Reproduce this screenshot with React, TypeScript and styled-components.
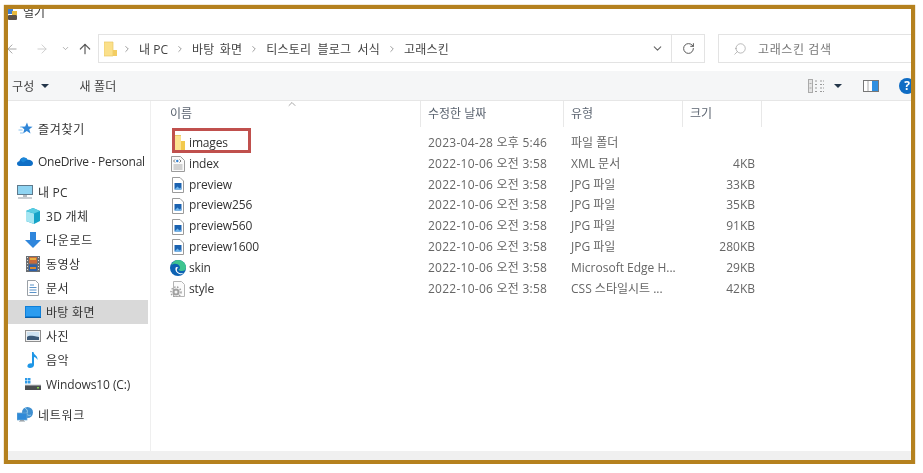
import React from 'react';
import styled, { createGlobalStyle } from 'styled-components';
import { ArrowLeft, ArrowRight, ArrowUp, ChevronDown, ChevronRight, ChevronUp, RotateCw, Search } from 'lucide-react';

const GlobalStyle = createGlobalStyle`
  html, body {
    margin: 0;
    padding: 0;
    background: #fff;
  }
  body {
    font-family: "Open Sans", "Noto Sans CJK KR", sans-serif;
    font-size: 12px;
    color: #3a3a3a;
  }
`;

const Frame = styled.div`
  box-sizing: border-box;
  width: 911px;
  height: 459px;
  margin: 5px 0 0 4px;
  border: 4px solid #b5811e;
  box-shadow: 0 0 1px #b5811e;
  display: flex;
  flex-direction: column;
  overflow: hidden;
  background: #fff;
  filter: blur(0.4px);
`;

const TitleBar = styled.div`
  flex: none;
  height: 25px;
  display: flex;
  align-items: flex-start;
  gap: 6px;
  line-height: 12px;
  color: #333;
  margin-top: -2px;
  margin-bottom: 2px;
`;

const TitleSvg = styled.svg`
  flex: none;
  margin-top: 2px;
`;

const NavRow = styled.div`
  flex: none;
  height: 29px;
  margin-bottom: 8px;
  display: flex;
  align-items: center;
`;

const NavButton = styled.span<{ $w: number; $ml?: number; $color: string }>`
  flex: none;
  width: ${(p) => p.$w}px;
  margin-left: ${(p) => p.$ml || 0}px;
  display: flex;
  justify-content: center;
  color: ${(p) => p.$color};
  svg {
    flex: none;
  }
`;

const AddressBox = styled.div`
  flex: none;
  box-sizing: border-box;
  width: 607px;
  height: 29px;
  margin-left: 3px;
  border: 1px solid #e3e3e3;
  display: flex;
  align-items: center;
  padding-left: 5px;
  color: #444;
`;

const Crumbs = styled.div`
  flex: 1;
  display: flex;
  align-items: center;
  gap: 7px;
  white-space: nowrap;
`;

const Crumb = styled.span<{ $track: number; $word: number }>`
  letter-spacing: ${(p) => p.$track}px;
  word-spacing: ${(p) => p.$word}px;
`;

const FolderWrap = styled.span`
  display: flex;
  margin-right: -2px;
`;

const CrumbSep = styled(ChevronRight)`
  color: #8a8a8a;
  flex: none;
`;

const AddressArrow = styled(ChevronDown)`
  color: #666;
  margin-right: 7px;
`;

const AddressTail = styled.span`
  flex: none;
  width: 32px;
  display: flex;
  justify-content: center;
  height: 100%;
  align-items: center;
  border-left: 1px solid #e3e3e3;
  color: #555;
`;

const SearchBox = styled.div`
  flex: none;
  box-sizing: border-box;
  width: 210px;
  height: 29px;
  margin-left: 13px;
  border: 1px solid #e3e3e3;
  display: flex;
  align-items: center;
  gap: 11px;
  padding-left: 14px;
  color: #777;
  letter-spacing: 0.6px;
`;

const SearchGlass = styled(Search)`
  transform: scaleX(-1);
  color: #8c8c8c;
`;

const Toolbar = styled.div`
  flex: none;
  box-sizing: border-box;
  height: 30px;
  background: #f5f6f7;
  border-bottom: 1px solid #e6e6e6;
  display: flex;
  align-items: center;
  padding-left: 4px;
  color: #444;
`;

const ToolButton = styled.span`
  display: flex;
  align-items: center;
  gap: 7px;
  margin-right: 30px;
  letter-spacing: 0.2px;
`;

const Caret = styled.i`
  width: 0;
  height: 0;
  border-left: 4px solid transparent;
  border-right: 4px solid transparent;
  border-top: 4px solid #24364a;
`;

const ToolRight = styled.div`
  margin-left: auto;
  display: flex;
  align-items: center;
  margin-right: -4px;
`;

const ViewIcon = styled.svg`
  margin-right: 10px;
`;

const PaneIcon = styled.svg`
  margin-left: 21px;
`;

const HelpDot = styled.span`
  flex: none;
  width: 16px;
  height: 16px;
  margin-left: 20px;
  border-radius: 50%;
  background: #0f6cc4;
  color: #fff;
  font-weight: 700;
  font-size: 12px;
  line-height: 16px;
  text-align: center;
`;

const Body = styled.div`
  flex: 1;
  min-height: 0;
  display: flex;
`;

const Sidebar = styled.nav`
  flex: none;
  box-sizing: border-box;
  width: 143px;
  padding-top: 16px;
  border-right: 1px solid #efefef;
`;

const SideRow = styled.div<{ $nested?: boolean; $active?: boolean; $gap?: number }>`
  box-sizing: border-box;
  width: 140px;
  height: 24px;
  margin-top: ${(p) => p.$gap || 0}px;
  padding-left: ${(p) => (p.$nested ? 17 : 9)}px;
  display: flex;
  align-items: center;
  gap: 5px;
  white-space: nowrap;
  color: #333;
  background: ${(p) => (p.$active ? '#d9d9d9' : 'transparent')};
`;

const SideLabel = styled.span<{ $track: number }>`
  letter-spacing: ${(p) => p.$track}px;
`;

const IconBox = styled.span`
  flex: none;
  width: 16px;
  height: 16px;
  display: block;
  svg {
    display: block;
  }
`;

const Main = styled.main`
  flex: 1;
  min-width: 0;
`;

const Columns = styled.div`
  display: grid;
  grid-template-columns: 270px 143px 119px 79px;
`;

const HeaderRow = styled(Columns)`
  height: 26px;
  margin-bottom: 6px;
  color: #5b6470;
`;

const HeaderCell = styled.div<{ $first?: boolean }>`
  padding-left: ${(p) => (p.$first ? 19 : 7)}px;
  border-right: 1px solid #e8e8e8;
  line-height: 26px;
  position: relative;
`;

const SortMark = styled(ChevronUp)`
  position: absolute;
  left: 135px;
  top: -3px;
  color: #8a8a8a;
`;

const FileRow = styled(Columns)`
  height: 20.8px;
  line-height: 20.8px;
  color: #666;
  white-space: nowrap;
`;

const NameCell = styled.div`
  padding-left: 19px;
  display: flex;
  align-items: center;
  gap: 3px;
  color: #333;
  letter-spacing: -0.15px;
  position: relative;
`;

const DateCell = styled.div`
  padding-left: 7px;
  letter-spacing: 0.25px;
`;

const Cell = styled.div`
  padding-left: 7px;
`;

const SizeCell = styled.div`
  padding-right: 7px;
  text-align: right;
`;

const RedMark = styled.div`
  position: absolute;
  left: 21px;
  top: -5px;
  width: 73px;
  height: 19px;
  border: 3px solid #c0504d;
`;

const BottomStrip = styled.div`
  flex: none;
  height: 9px;
  background: #f0f0f0;
`;

const TitleIcon = () => (
  <TitleSvg width="9" height="12" viewBox="0 0 9 12">
    <rect x="0" y="0" width="5" height="5" fill="#3f7fd0" />
    <rect x="4" y="2" width="5" height="4" fill="#e8b93c" />
    <rect x="0" y="6" width="9" height="5" rx="1" fill="#5a5148" />
  </TitleSvg>
);

const ViewsIcon = () => (
  <ViewIcon width="16" height="14" viewBox="0 0 16 14">
    <rect x="0.5" y="0.5" width="4" height="13" fill="#e4e4e4" stroke="#aaa" />
    <path d="M1.5 4.5h2M1.5 9h2" stroke="#aaa" />
    <path d="M7 2h3M12 2h4M7 5.500h3M12 5.500h4M7 9h3M12 9h4M7 12.500h3M12 12.500h4" stroke="#9a9a9a" strokeDasharray="2 1" />
  </ViewIcon>
);

const PreviewPaneIcon = () => (
  <PaneIcon width="16" height="12" viewBox="0 0 16 12">
    <rect x="0.500" y="0.500" width="15" height="11" fill="#fff" stroke="#777" />
    <rect x="9" y="1" width="6" height="10" fill="#2f8fe0" />
    <path d="M5 1v10" stroke="#aaa" />
  </PaneIcon>
);

const FolderFlat = () => (
  <svg width="13" height="16" viewBox="0 0 13 16">
    <path d="M0 1h9v14H0z" fill="#fbe08a" stroke="#e9c766" strokeWidth="0.7" />
    <path d="M9 9h4v6H9z" fill="#f3cd62" />
  </svg>
);

const FolderTall = () => (
  <svg width="16" height="18" viewBox="0 0 16 18">
    <path d="M5 0h6v17H5z" fill="#fce28f" />
    <path d="M11 6h4v11h-4z" fill="#f2c94c" />
    <path d="M5 0h6v1H5z" fill="#e9c766" />
  </svg>
);

const Star = () => (
  <svg width="16" height="16" viewBox="0 0 16 16">
    <path d="M10 1.500l1.400 4 4.200.2-3.300 2.600 1.200 4.200-3.700-2.500-3.700 2.500 1.200-4.200-3.300-2.600 4.200-.2z" fill="#2f86d8" />
    <path d="M3 6h3M1.500 9h4M3 12h3" stroke="#8cc4f0" strokeWidth="1" />
  </svg>
);

const Cloud = () => (
  <svg width="16" height="16" viewBox="0 0 16 16">
    <path d="M2.500 13C.8 13 0 11.800 0 10.600 0 9.300 1 8.300 2.300 8.200 2.900 6 4.600 4.500 6.700 4.500c1.700 0 3.100.9 3.800 2.300 2.300-.3 5.500.9 5.500 3.500 0 1.600-1.200 2.700-2.800 2.700z" fill="#0f6fc6" />
    <path d="M6.700 4.500c1.700 0 3.100.9 3.800 2.300L6 9.500 3.500 7.300C4.100 5.600 5.300 4.500 6.700 4.500z" fill="#1b86d8" />
  </svg>
);

const Monitor = () => (
  <svg width="16" height="16" viewBox="0 0 16 16">
    <rect x="0" y="1" width="16" height="10" fill="#5f7a8c" />
    <rect x="1" y="2" width="14" height="8" fill="#8fd4f2" />
    <rect x="6" y="11" width="4" height="2" fill="#b5bcc2" />
    <rect x="1" y="13" width="14" height="2" fill="#c9ced2" />
  </svg>
);

const Cube = () => (
  <svg width="16" height="16" viewBox="0 0 16 16">
    <path d="M8 0l7 3v10l-6 3-8-3V3z" fill="#15a3c7" />
    <path d="M1 3l8 2.500V16l-8-3z" fill="#a6e6f2" />
    <path d="M8 0l7 3-6 2.500L1 3z" fill="#58cde2" />
  </svg>
);

const DownArrow = () => (
  <svg width="16" height="16" viewBox="0 0 16 16">
    <path d="M5 0h6v8h5l-8 8-8-8h5z" fill="#2f86dc" />
  </svg>
);

const Film = () => (
  <svg width="16" height="16" viewBox="0 0 16 16">
    <rect x="1" y="0" width="14" height="16" fill="#6b6f73" />
    <rect x="4" y="1" width="8" height="6.500" fill="#c86a3a" />
    <rect x="4" y="8.500" width="8" height="6.500" fill="#2c5fa8" />
    <path d="M5 3h6" stroke="#e8b040" strokeWidth="2" />
    <path d="M5 12h6" stroke="#d88a30" strokeWidth="2" />
    <path d="M2.500 1v14M13.500 1v14" stroke="#dfdfdf" strokeDasharray="1 2" />
  </svg>
);

const Doc = () => (
  <svg width="16" height="16" viewBox="0 0 16 16">
    <path d="M2.500.5h8l3 3v12h-11z" fill="#fff" stroke="#9aa0a6" />
    <path d="M5 5h4M4.500 7.500h7M4.500 10h7M4.500 12.500h7" stroke="#5a93c9" />
  </svg>
);

const Desktop = () => (
  <svg width="16" height="16" viewBox="0 0 16 16">
    <rect x="0" y="2" width="16" height="12" fill="#0f7fd8" />
    <rect x="1" y="3" width="14" height="9" fill="#2b9cf0" />
    <path d="M0 13h16v1H0z" fill="#0c5fa8" />
  </svg>
);

const Photo = () => (
  <svg width="16" height="16" viewBox="0 0 16 16">
    <rect x="0.500" y="2.500" width="15" height="11" fill="#f1f1f1" stroke="#8f8f8f" />
    <rect x="2" y="4" width="12" height="8" fill="#cfe3f2" />
    <path d="M2 9c3-2 5-1 12 0v3H2z" fill="#3c5a78" />
  </svg>
);

const Note = () => (
  <svg width="16" height="16" viewBox="0 0 16 16">
    <path d="M7 0h1.500c.3 3 4.500 3.500 4 8-.8-2-2.500-3-3.500-3v8c0 2-2 3-4 3s-3-1-2.500-2.500S5 11 7 11.500z" fill="#1e96e6" />
  </svg>
);

const Drive = () => (
  <svg width="16" height="16" viewBox="0 0 16 16">
    <path d="M0 2h2.500v2.500H0zM3 2h2.500v2.500H3zM0 5h2.500v2.500H0zM3 5h2.500v2.500H3z" fill="#2f9be8" />
    <rect x="0" y="9" width="16" height="5" fill="#4a4d50" />
    <path d="M0 9h16" stroke="#c4c8cb" />
    <rect x="12" y="11" width="2" height="1.500" fill="#7fd04a" />
  </svg>
);

const Network = () => (
  <svg width="16" height="16" viewBox="0 0 16 16">
    <circle cx="10.500" cy="5.500" r="5.500" fill="#3f8fd0" />
    <path d="M8 1c2 1 3 3 2 5s2 3 4 2" stroke="#9cd0ee" fill="none" />
    <rect x="0" y="6" width="10" height="7" fill="#2f8ad8" stroke="#6da8d4" strokeWidth="0.7" />
    <rect x="3" y="13" width="4" height="1" fill="#9aa3aa" />
    <rect x="2" y="14" width="6" height="1" fill="#c4cacd" />
  </svg>
);

const XmlFile = () => (
  <svg width="16" height="16" viewBox="0 0 16 16">
    <path d="M1.500.5h9l4 4v11h-13z" fill="#fafafa" stroke="#9b9b9b" />
    <path d="M5 3.500L3.500 5 5 6.500M9.500 3.500L11 5 9.500 6.500" stroke="#777" fill="none" />
    <circle cx="7.300" cy="5" r="1.200" fill="#2f7fd0" />
    <path d="M3.500 9h9M3.500 11h9M3.500 13h9" stroke="#a8a8a8" />
  </svg>
);

const JpgFile = () => (
  <svg width="16" height="16" viewBox="0 0 16 16">
    <path d="M2.500.5h7.500l3.500 3.500v11.500h-11z" fill="#fff" stroke="#9b9b9b" />
    <rect x="4.500" y="6" width="7" height="6.500" fill="#1b62b0" />
    <path d="M4.500 12.500l3-3 2 2 1-1 1 2z" fill="#6cb4ec" />
  </svg>
);

const EdgeFile = () => (
  <svg width="16" height="16" viewBox="0 0 16 16">
    <circle cx="8" cy="8" r="8" fill="#0d62b3" />
    <path d="M1 5.500C2.500 2 5 0 8 0c4.500 0 8 3.300 8 7.500 0 2.500-2 3.500-4 3.500-1.500 0-3-.5-3.500-1.500 1.500-.5 2-2 1-3.500C8 3.500 3.500 3 1 5.500z" fill="#3ec48f" />
    <path d="M6 7c-1.500 2.500 0 6 3.500 7 2 .5 3.500 0 4.500-1-2 .5-6 .5-7-2-.5-1.500 0-3 1.500-3.500z" fill="#fff" />
  </svg>
);

const CssFile = () => (
  <svg width="16" height="16" viewBox="0 0 16 16">
    <path d="M3.500.5h8l3 3v12h-11z" fill="#fbfbfb" stroke="#b5b5b5" />
    <circle cx="6" cy="11" r="3.600" fill="#a0a0a0" />
    <circle cx="6" cy="11" r="5" fill="none" stroke="#a0a0a0" strokeWidth="1.500" strokeDasharray="1.500 1.500" />
    <circle cx="6" cy="11" r="1.500" fill="#f4f4f4" />
  </svg>
);

const sideItems: { label: string; icon: React.ReactNode; track: number; nested?: boolean; active?: boolean; gap?: number }[] = [
  { label: '즐겨찾기', icon: <Star />, track: 0.7 },
  { label: 'OneDrive - Personal', icon: <Cloud />, track: -0.26, gap: 8 },
  { label: '내 PC', icon: <Monitor />, track: 0.2, gap: 7 },
  { label: '3D 개체', icon: <Cube />, track: 0.3, nested: true },
  { label: '다운로드', icon: <DownArrow />, track: 0.7, nested: true },
  { label: '동영상', icon: <Film />, track: 0.5, nested: true },
  { label: '문서', icon: <Doc />, track: 0.5, nested: true },
  { label: '바탕 화면', icon: <Desktop />, track: 0.3, nested: true, active: true },
  { label: '사진', icon: <Photo />, track: 0.5, nested: true },
  { label: '음악', icon: <Note />, track: 0.5, nested: true },
  { label: 'Windows10 (C:)', icon: <Drive />, track: -0.1, nested: true },
  { label: '네트워크', icon: <Network />, track: 0.7, gap: 7 },
];

const oldDate = '2022-10-06 오전 3:58';

const files: { name: string; icon: React.ReactNode; date: string; type: string; size: string; marked?: boolean }[] = [
  { name: 'images', icon: <FolderTall />, date: '2023-04-28 오후 5:46', type: '파일 폴더', size: '', marked: true },
  { name: 'index', icon: <XmlFile />, date: oldDate, type: 'XML 문서', size: '4KB' },
  { name: 'preview', icon: <JpgFile />, date: oldDate, type: 'JPG 파일', size: '33KB' },
  { name: 'preview256', icon: <JpgFile />, date: oldDate, type: 'JPG 파일', size: '35KB' },
  { name: 'preview560', icon: <JpgFile />, date: oldDate, type: 'JPG 파일', size: '91KB' },
  { name: 'preview1600', icon: <JpgFile />, date: oldDate, type: 'JPG 파일', size: '280KB' },
  { name: 'skin', icon: <EdgeFile />, date: oldDate, type: 'Microsoft Edge H...', size: '29KB' },
  { name: 'style', icon: <CssFile />, date: oldDate, type: 'CSS 스타일시트 ...', size: '42KB' },
];

const crumbs = [
  { label: '내 PC', track: 0, word: 0 },
  { label: '바탕 화면', track: 0.2, word: 2 },
  { label: '티스토리 블로그 서식', track: 0.2, word: 3 },
  { label: '고래스킨', track: 0.2, word: 0 },
];

export default function App() {
  return (
    <>
      <GlobalStyle />
      <Frame>
        <TitleBar>
          <TitleIcon />
          <span>열기</span>
        </TitleBar>
        <NavRow>
          <NavButton $w={8} $color="#9a9a9a"><ArrowLeft size={14} strokeWidth={1.5} /></NavButton>
          <NavButton $w={20} $ml={16} $color="#c8c8c8"><ArrowRight size={14} strokeWidth={1.5} /></NavButton>
          <NavButton $w={10} $ml={8} $color="#999"><ChevronDown size={9} strokeWidth={2} /></NavButton>
          <NavButton $w={20} $ml={5} $color="#5c5c5c"><ArrowUp size={16} strokeWidth={1.8} /></NavButton>
          <AddressBox>
            <Crumbs>
              <FolderWrap><FolderFlat /></FolderWrap>
              {crumbs.map((c) => (
                <React.Fragment key={c.label}>
                  <CrumbSep size={10} strokeWidth={2} />
                  <Crumb $track={c.track} $word={c.word}>{c.label}</Crumb>
                </React.Fragment>
              ))}
            </Crumbs>
            <AddressArrow size={13} strokeWidth={2} />
            <AddressTail><RotateCw size={13} strokeWidth={1.8} /></AddressTail>
          </AddressBox>
          <SearchBox>
            <SearchGlass size={14} strokeWidth={1} />
            <span>고래스킨 검색</span>
          </SearchBox>
        </NavRow>
        <Toolbar>
          <ToolButton>구성 <Caret /></ToolButton>
          <ToolButton>새 폴더</ToolButton>
          <ToolRight>
            <ViewsIcon />
            <Caret />
            <PreviewPaneIcon />
            <HelpDot>?</HelpDot>
          </ToolRight>
        </Toolbar>
        <Body>
          <Sidebar>
            {sideItems.map((s) => (
              <SideRow key={s.label} $nested={s.nested} $active={s.active} $gap={s.gap}>
                <IconBox>{s.icon}</IconBox>
                <SideLabel $track={s.track}>{s.label}</SideLabel>
              </SideRow>
            ))}
          </Sidebar>
          <Main>
            <HeaderRow>
              <HeaderCell $first>
                이름
                <SortMark size={12} strokeWidth={1.5} />
              </HeaderCell>
              <HeaderCell>수정한 날짜</HeaderCell>
              <HeaderCell>유형</HeaderCell>
              <HeaderCell>크기</HeaderCell>
            </HeaderRow>
            {files.map((f) => (
              <FileRow key={f.name}>
                <NameCell>
                  <IconBox>{f.icon}</IconBox>
                  <span>{f.name}</span>
                  {f.marked && <RedMark />}
                </NameCell>
                <DateCell>{f.date}</DateCell>
                <Cell>{f.type}</Cell>
                <SizeCell>{f.size}</SizeCell>
              </FileRow>
            ))}
          </Main>
        </Body>
        <BottomStrip />
      </Frame>
    </>
  );
}
